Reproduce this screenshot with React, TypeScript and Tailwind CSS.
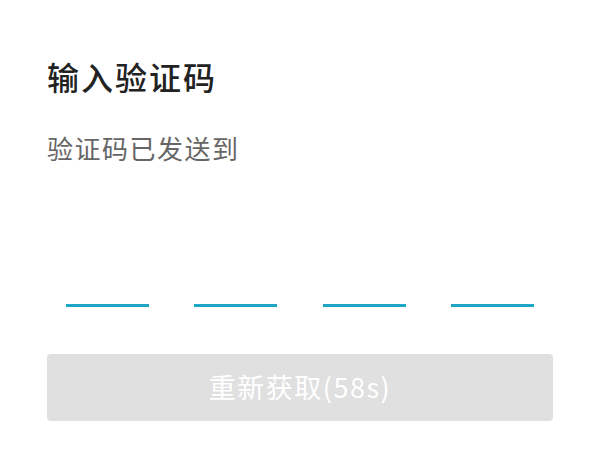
export default function App() {
	const slots = [0, 1, 2, 3];

	return (
		<div
			className="h-[450px] w-[600px] bg-white px-[47px] pt-[56px]"
			style={{ fontFamily: '"Noto Sans CJK SC", "Noto Sans", sans-serif' }}
		>
			{/* heading */}
			<h1 className="text-[32px] font-medium leading-[40px] tracking-[2px] text-[#222222]">输入验证码</h1>
			<p className="mt-[36px] text-[26px] leading-[32px] tracking-[1.5px] text-[#666666]">验证码已发送到</p>

			{/* code inputs */}
			<div className="mt-[140px] flex justify-between px-[19px]">
				{slots.map((i) => (
					<div key={i} className="h-[3px] w-[83px] bg-[#1fa6c4]" />
				))}
			</div>

			<button
				type="button"
				className="mt-[47px] flex h-[67px] w-full items-center justify-center rounded-[4px] bg-[#e0e0e0] text-[27px] tracking-[1.5px] text-white"
			>
				重新获取(58s)
			</button>
		</div>
	);
}
